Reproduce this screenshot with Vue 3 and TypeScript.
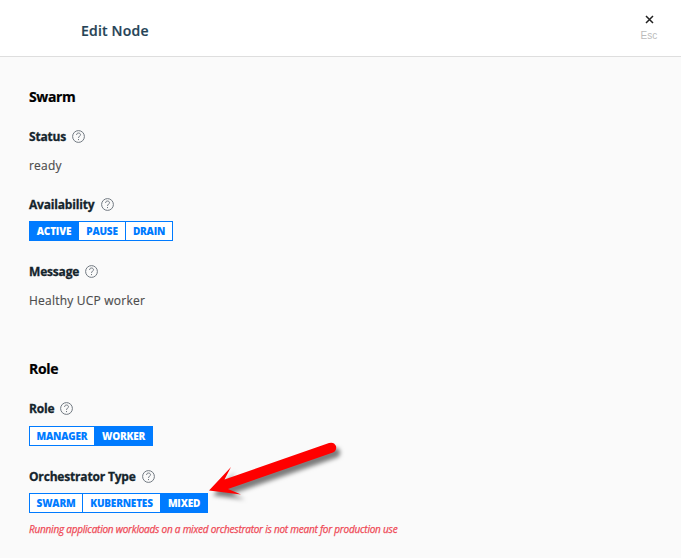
<script setup lang="ts">
interface Option { label: string; width: number }
interface Field {
  label: string
  labelWidth: number
  value?: string
  options?: Option[]
  active?: string
  note?: string
}
interface Section { title: string; fields: Field[] }

const sections: Section[] = [
  {
    title: 'Swarm',
    fields: [
      { label: 'Status', labelWidth: 37, value: 'ready' },
      {
        label: 'Availability',
        labelWidth: 66,
        active: 'Active',
        options: [
          { label: 'Active', width: 50 },
          { label: 'Pause', width: 47 },
          { label: 'Drain', width: 47 },
        ],
      },
      { label: 'Message', labelWidth: 50, value: 'Healthy UCP worker' },
    ],
  },
  {
    title: 'Role',
    fields: [
      {
        label: 'Role',
        labelWidth: 25,
        active: 'Worker',
        options: [
          { label: 'Manager', width: 66 },
          { label: 'Worker', width: 58 },
        ],
      },
      {
        label: 'Orchestrator Type',
        labelWidth: 107,
        active: 'Mixed',
        options: [
          { label: 'Swarm', width: 54 },
          { label: 'Kubernetes', width: 78 },
          { label: 'Mixed', width: 47 },
        ],
        note: 'Running application workloads on a mixed orchestrator is not meant for production use',
      },
    ],
  },
]
</script>

<template>
  <div class="page">
    <header class="header">
      <h1>Edit Node</h1>
      <button class="close" aria-label="Close">
        <svg width="9" height="9" viewBox="0 0 9 9"><path d="M1 1L8 8M8 1L1 8" /></svg>
        <span>Esc</span>
      </button>
    </header>
    <main>
      <section v-for="s in sections" :key="s.title">
        <h2>{{ s.title }}</h2>
        <div v-for="f in s.fields" :key="f.label" class="field" :class="{ toggle: f.options }">
          <div class="label">
            <span :style="{ width: f.labelWidth + 'px' }">{{ f.label }}</span>
            <svg class="help" width="13" height="13" viewBox="0 0 13 13">
              <circle cx="6.5" cy="6.5" r="5.9" />
              <path d="M4.6 5C4.6 3.7 5.4 3 6.5 3S8.5 3.7 8.5 4.8C8.5 6.1 6.5 6.2 6.5 7.9M6.5 9V10.1" />
            </svg>
          </div>
          <p v-if="f.value" class="value">{{ f.value }}</p>
          <div v-if="f.options" class="group">
            <button
              v-for="o in f.options"
              :key="o.label"
              :class="{ active: o.label === f.active }"
              :style="{ width: o.width + 'px' }"
            >{{ o.label }}</button>
          </div>
          <p v-if="f.note" class="note">{{ f.note }}</p>
        </div>
      </section>
    </main>
    <svg class="arrow" width="160" height="80" viewBox="200 430 160 80">
      <path d="M209 490.5L231 467L224.5 479.5L329 443Q334 441.5 336 446Q337 450.5 333 452.5L228 489L241 494.5Z" />
    </svg>
  </div>
</template>

<style>
body { margin: 0; background: #fafafa; }
</style>

<style scoped>
.page {
  position: relative;
  box-sizing: border-box;
  height: 558px;
  overflow: hidden;
  background: #fafafa;
  font-family: "Open Sans", "Noto Sans", sans-serif;
}
h1, h2, p { margin: 0; }
button { font-family: inherit; padding: 0; margin: 0; }
.header {
  box-sizing: border-box;
  height: 57px;
  padding: 0 19px 0 81px;
  display: flex;
  justify-content: space-between;
  background: #fff;
  border-bottom: 1px solid #dedede;
}
h1 { font-size: 14px; line-height: 20px; padding-top: 21px; font-weight: 600; color: #254356; letter-spacing: .2px; -webkit-text-stroke: .2px; }
.close {
  width: 26px;
  height: 44px;
  padding-top: 15px;
  display: flex;
  flex-direction: column;
  align-items: center;
  gap: 6px;
  border: 0;
  background: none;
}
.close svg { flex: none; fill: none; stroke: #222; stroke-width: 1.5; }
.close span { font: 10px/12px "Liberation Sans", sans-serif; color: #bbb; letter-spacing: .1px; }
main { padding: 30px 29px 0; }
section { height: 272px; }
h2 { height: 20px; margin-bottom: 19px; font-size: 14px; line-height: 20px; font-weight: 700; color: #000; letter-spacing: -.35px; -webkit-text-stroke: .2px; }
.field { height: 68px; }
.field.toggle { height: 67px; }
.label { display: flex; align-items: center; gap: 6px; height: 20px; font-size: 12px; font-weight: 700; color: #14242c; letter-spacing: -.18px; white-space: nowrap; -webkit-text-stroke: .3px; }
.help { fill: none; stroke: #707880; stroke-width: 1; }
.value { margin-top: 10px; font-size: 12px; line-height: 20px; color: #4c4c4c; letter-spacing: .22px; -webkit-text-stroke: .15px; }
.group { display: flex; margin-top: 7px; }
section:last-child .field.toggle { height: 68px; }
section:last-child .group { margin-top: 8px; }
section:last-child .field:last-child .group { margin-top: 7px; }
.group button {
  box-sizing: border-box;
  height: 20px;
  border: 1px solid #007bff;
  border-left-width: 0;
  background: #fff;
  color: #007bff;
  font-size: 10px;
  line-height: 18px;
  font-weight: 800;
  letter-spacing: -.2px;
  text-transform: uppercase;
  white-space: nowrap;
}
.group button:first-child { border-left-width: 1px; }
.group button.active { background: #007bff; color: #fff; }
.note { margin-top: 6px; font-size: 10px; line-height: 20px; font-style: italic; color: #ef4a57; white-space: nowrap; letter-spacing: -.23px; -webkit-text-stroke: .25px; }
.arrow { position: absolute; left: 200px; top: 430px; fill: #f00; filter: drop-shadow(4px 5px 2px rgba(0, 0, 0, .5)); }
</style>
